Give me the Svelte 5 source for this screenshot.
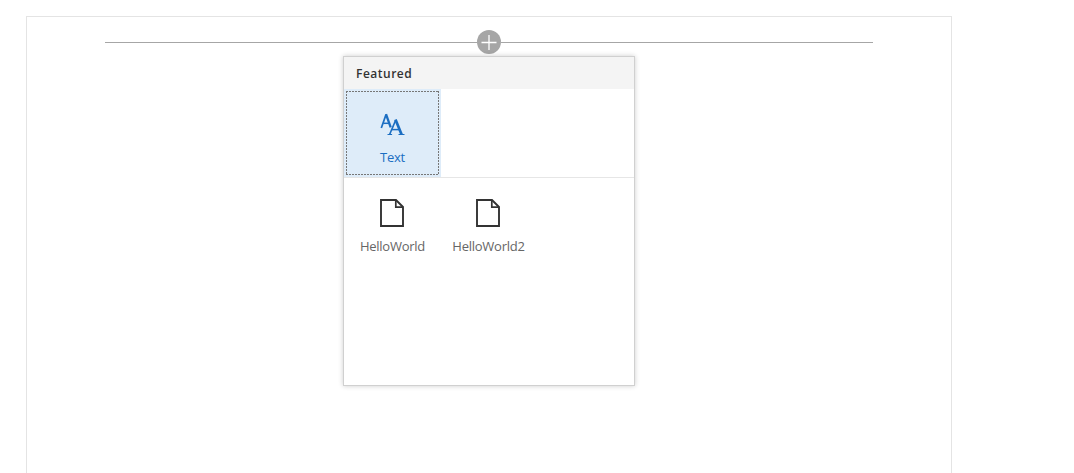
<script>
  const webparts = ['HelloWorld', 'HelloWorld2'];
</script>

<main class="canvas">
  <div class="add-row">
    <span class="line"></span>
    <button class="add" aria-label="Add">
      <svg width="24" height="24" viewBox="0 0 24 24">
        <path d="M12 5v15M4.5 12.5h15" stroke="#fff" stroke-width="1.3" fill="none" />
      </svg>
    </button>
    <span class="line"></span>
  </div>

  <section class="toolbox">
    <h2>Featured</h2>
    <div class="group featured">
      <button class="tile selected">
        <svg class="text-icon" width="26" height="30" viewBox="0 -3 26 30" fill="none" stroke="#1b6ec2">
          <path d="M1.3 16 6 2.6" stroke-width="1.7" />
          <path d="M6 2.2 10.7 15.4" stroke-width="2.3" />
          <path d="M3.3 11.3h5.6" stroke-width="1.5" />
          <path d="M9.6 22.5 15.6 8.4" stroke-width="1.6" />
          <path d="M15.5 7.4 21.6 22.4" stroke-width="2.7" />
          <path d="M11.7 17.6h7.6" stroke-width="1.5" />
          <path d="M7.5 22.5h4.6M18.5 22.5h6" stroke-width="1" />
        </svg>
        <span class="label">Text</span>
      </button>
    </div>
    <div class="group">
      {#each webparts as name}
        <button class="tile">
          <svg width="26" height="30" viewBox="0 0 26 30" fill="none" stroke="#333" stroke-width="1.9">
            <path d="M2 2H17L24 9V28H2Z" />
            <path d="M16.8 2V9.2H24" stroke-width="1.7" />
          </svg>
          <span class="label">{name}</span>
        </button>
      {/each}
    </div>
  </section>
</main>

<style>
  :global(body) {
    background: #fff;
    overflow: hidden;
    font-family: "Open Sans", "Noto Sans", sans-serif;
  }

  .canvas {
    box-sizing: border-box;
    width: 926px;
    height: 457px;
    margin: 16px 0 0 26px;
    border: 1px solid #e4e4e4;
    border-bottom: 0;
    display: flex;
    flex-direction: column;
  }

  .add-row {
    display: flex;
    align-items: center;
    width: 768px;
    height: 24px;
    margin: 13px 0 0 78px;
  }

  .line {
    flex: 1;
    height: 1px;
    margin-top: 1px;
    background: #a6a6a6;
  }

  button {
    border: 0;
    padding: 0;
    background: none;
    font: inherit;
    color: inherit;
  }

  .add {
    width: 24px;
    height: 24px;
    border-radius: 50%;
    background: #a6a6a6;
  }

  .add svg {
    display: block;
  }

  .toolbox {
    box-sizing: border-box;
    width: 292px;
    height: 330px;
    margin: 2px 0 0 316px;
    border: 1px solid #d0d0d0;
    background: #fff;
    box-shadow: 0 0 5px rgba(0, 0, 0, 0.2);
  }

  h2 {
    box-sizing: border-box;
    height: 32px;
    margin: 0;
    padding-left: 12px;
    background: #f4f4f4;
    color: #333;
    font-size: 12px;
    font-weight: 600;
    line-height: 33px;
    letter-spacing: 0.5px;
  }

  .group {
    display: flex;
  }

  .featured {
    border-bottom: 1px solid #e6e6e6;
  }

  .tile {
    position: relative;
    box-sizing: border-box;
    width: 97px;
    height: 88px;
    display: flex;
    flex-direction: column;
    align-items: center;
    justify-content: flex-start;
    padding-top: 20px;
    color: #666;
  }

  .tile + .tile {
    margin-left: -1px;
  }

  .tile svg {
    display: block;
    height: 30px;
    margin-right: 1px;
  }

  .tile .text-icon {
    margin-right: 0;
  }

  .label {
    margin-top: 9px;
    font-size: 13px;
    line-height: 18px;
    letter-spacing: -0.25px;
  }

  .selected {
    background: #deecf9;
    color: #1b6ec2;
  }

  .selected::after {
    content: "";
    position: absolute;
    inset: 2px;
    --across: repeating-linear-gradient(90deg, #777 0 2px, transparent 2px 3px);
    --down: repeating-linear-gradient(180deg, #777 0 2px, transparent 2px 3px);
    background:
      var(--across) top / 100% 1px no-repeat,
      var(--across) bottom / 100% 1px no-repeat,
      var(--down) left / 1px 100% no-repeat,
      var(--down) right / 1px 100% no-repeat;
  }
</style>
